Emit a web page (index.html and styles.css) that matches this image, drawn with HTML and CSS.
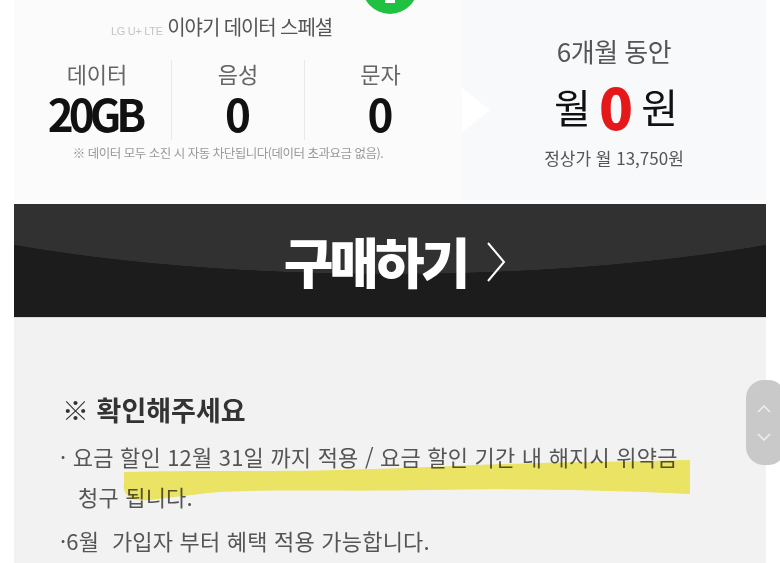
FILE: index.html
```html
<!DOCTYPE html>
<html lang="ko">
<head>
    <meta charset="UTF-8">
    <meta name="viewport" content="width=device-width, initial-scale=1.0">
    <title>이야기 데이터 스페셜</title>
    <link rel="stylesheet" href="styles.css">
</head>
<body>
    <div class="page">
        <div class="plan">
            <div class="plan-info">
                <div class="badge"><span></span></div>
                <div class="plan-name"><span class="carrier">LG U+ LTE</span> 이야기 데이터 스페셜</div>
                <div class="stats">
                    <div class="stat">
                        <span class="label">데이터</span>
                        <b class="value value-data">20GB</b>
                    </div>
                    <div class="stat">
                        <span class="label">음성</span>
                        <b class="value">0</b>
                    </div>
                    <div class="stat">
                        <span class="label">문자</span>
                        <b class="value">0</b>
                    </div>
                </div>
                <p class="note">※ 데이터 모두 소진 시 자동 차단됩니다(데이터 초과요금 없음).</p>
            </div>
            <div class="plan-price">
                <p class="period">6개월 동안</p>
                <p class="price">월 <b>0</b> 원</p>
                <p class="regular">정상가 월 13,750원</p>
            </div>
        </div>

        <a class="buy" href="#">
            <span>구매하기</span>
            <svg width="20" height="42" viewBox="0 0 20 42"><polyline points="2,2 18,21 2,40" fill="none" stroke="#fff" stroke-width="2"/></svg>
        </a>

        <div class="notice">
            <h2>※ 확인해주세요</h2>
            <p>· 요금 할인 12월 31일 까지 적용 / 요금 할인 기간 내 해지시 위약금<br><span class="indent">청구 됩니다.</span></p>
            <p>·6월&nbsp; 가입자 부터 혜택 적용 가능합니다.</p>
            <svg class="marker" width="780" height="563" viewBox="0 0 780 563">
                <path d="M124,472 C200,470 260,472 340,470 C430,468 520,462 600,462 L690,460 L690,494 C600,490 520,488 430,490 C330,492 240,488 200,494 L150,500 C130,502 122,494 124,484 Z" fill="#f4ea2e"/>
            </svg>
        </div>
    </div>

    <div class="scroll-btn">
        <svg width="14" height="8" viewBox="0 0 14 8"><polyline points="1,7 7,1 13,7" fill="none" stroke="#eee" stroke-width="1.6"/></svg>
        <svg width="14" height="8" viewBox="0 0 14 8"><polyline points="1,1 7,7 13,1" fill="none" stroke="#eee" stroke-width="1.6"/></svg>
    </div>
</body>
</html>
```

FILE: styles.css
```css
body {
    margin: 0;
    background: #fff;
    font-family: "Noto Sans CJK KR", "Noto Sans", sans-serif;
    overflow: hidden;
}
p {
    margin: 0;
}
.page {
    width: 752px;
    margin-left: 14px;
}

/* top card */
.plan {
    display: flex;
    height: 200px;
}
.plan-info {
    width: 448px;
    background: #fbfbfb;
}
.badge {
    width: 56px;
    height: 56px;
    margin: -42px 0 0 348px;
    border-radius: 50%;
    background: #20c140;
    display: flex;
    justify-content: center;
    align-items: flex-end;
}
.badge span {
    width: 10px;
    height: 4px;
    margin-bottom: 11px;
    background: #fff;
}
.plan-name {
    margin-left: 97px;
    font-size: 20px;
    line-height: 26px;
    color: #555;
    letter-spacing: -1.1px;
}
.carrier {
    font-family: "Liberation Sans", sans-serif;
    font-size: 11px;
    color: #c4c4c4;
    letter-spacing: -0.3px;
}
.stats {
    display: grid;
    grid-template-columns: 148px 133px 152px;
    margin: 16px 0 0 9px;
}
.stat {
    display: flex;
    flex-direction: column;
    align-items: center;
    height: 80px;
    border-left: 1px solid #e8e8e8;
}
.stat:first-child {
    border-left: none;
}
.label {
    font-size: 22px;
    line-height: 26px;
    color: #666;
}
.value {
    font-size: 44px;
    line-height: 40px;
    font-weight: 700;
    color: #111;
    margin-top: 7px;
}
.value-data {
    letter-spacing: -5px;
    padding-right: 5px;
}
.note {
    margin-top: 5px;
    text-align: center;
    font-size: 12.5px;
    line-height: 16px;
    color: #999;
    letter-spacing: -0.5px;
    padding-right: 20px;
}

.plan-price {
    position: relative;
    flex: 1;
    background: #f8f9fb;
    text-align: center;
    padding-top: 34px;
}
.plan-price::before {
    content: "";
    position: absolute;
    left: 0;
    top: 88px;
    width: 28px;
    height: 44px;
    background: #fff;
    clip-path: polygon(0 0, 100% 50%, 0 100%);
}
.period {
    font-size: 26px;
    line-height: 34px;
    color: #555;
    letter-spacing: -0.5px;
}
.price {
    margin-top: 8px;
    font-size: 40px;
    line-height: 60px;
    color: #111;
    word-spacing: -3px;
    padding-left: 4px;
}
.price b {
    color: #e5191a;
    font-size: 56px;
    font-weight: 900;
    vertical-align: top;
}
.regular {
    margin-top: 10px;
    font-size: 17px;
    line-height: 24px;
    color: #555;
}

/* buy button */
.buy {
    display: flex;
    justify-content: center;
    align-items: center;
    gap: 20px;
    height: 114px;
    margin-top: 4px;
    text-decoration: none;
    background: radial-gradient(ellipse 600px 131px at 50% -61px, #313131 99.6%, #1c1c1c 100%);
    border-bottom: 1px solid #d8d8d8;
    box-sizing: border-box;
}
.buy span {
    color: #fff;
    font-size: 54px;
    font-weight: 900;
    letter-spacing: -4px;
    line-height: 60px;
    padding-left: 10px;
}
.buy svg {
    margin-top: 2px;
}

/* notice */
.notice {
    position: relative;
    background: #f2f2f2;
    height: 260px;
    padding: 76px 0 0 46px;
    box-sizing: border-box;
    color: #555;
}
.notice h2 {
    margin: 0 0 10px 2px;
    font-size: 27px;
    line-height: 32px;
    font-weight: 700;
    color: #333;
    letter-spacing: 0;
}
.notice p {
    font-size: 22px;
    line-height: 40px;
    letter-spacing: 0.2px;
    margin-bottom: 4px;
}
.indent {
    padding-left: 18px;
}
.marker {
    position: absolute;
    left: -14px;
    top: -318px;
    opacity: 0.72;
    mix-blend-mode: multiply;
    pointer-events: none;
}

.scroll-btn {
    position: absolute;
    left: 746px;
    top: 380px;
    width: 40px;
    height: 85px;
    border-radius: 18px;
    background: #c9c9c9;
    display: flex;
    flex-direction: column;
    justify-content: center;
    gap: 20px;
    padding-left: 11px;
    box-sizing: border-box;
}
```
